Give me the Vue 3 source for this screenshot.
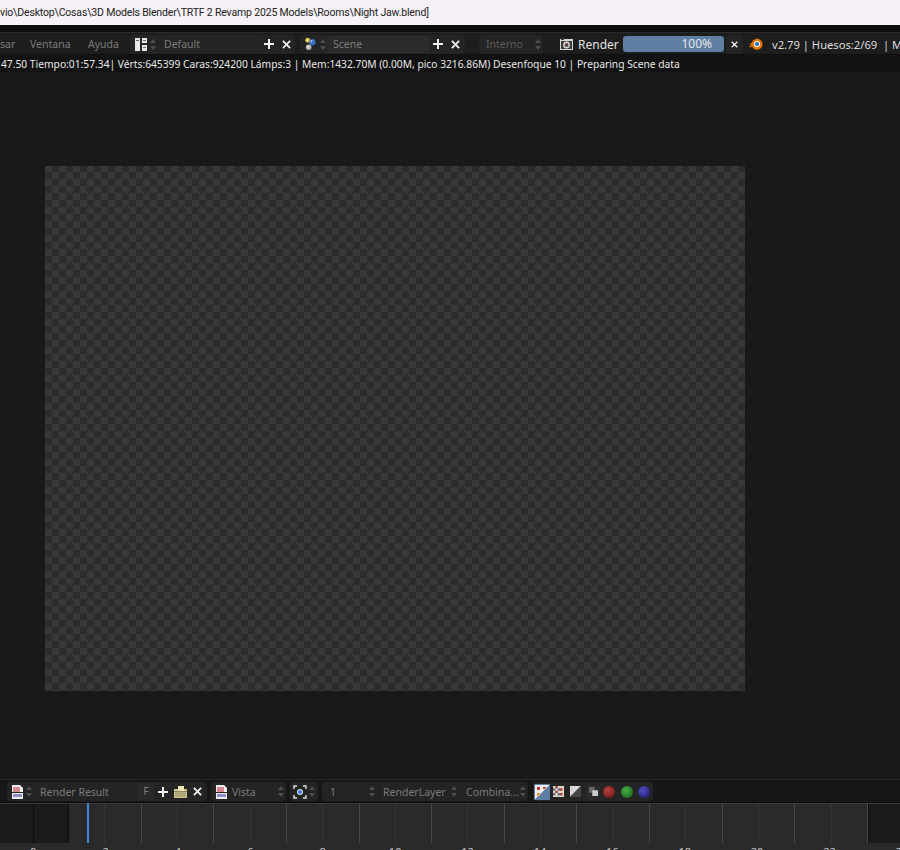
<script setup>
const ticks = Array.from({ length: 22 }, (_, i) => i)
const labels = [0, 2, 4, 6, 8, 10, 12, 14, 16, 18, 20, 22, 24]
</script>

<template>
  <div class="app">
    <div class="title">vio\Desktop\Cosas\3D Models Blender\TRTF 2 Revamp 2025 Models\Rooms\Night Jaw.blend]</div>
    <div class="gap-top"></div>

    <header class="topbar">
      <span class="menu clipped">sar</span>
      <span class="menu ventana">Ventana</span>
      <span class="menu ayuda">Ayuda</span>

      <div class="group g-default">
        <svg class="ic12" viewBox="0 0 12 13"><path fill="#e8e8e8" d="M0 0h5v13H0zM7 0h5v5H7zM7 7h5v6H7z"/><path fill="#666" d="M1 2h3v1H1zM8 2h3v1H8zM8 9h3v1H8z"/></svg>
        <i class="arrows a-l"></i>
        <span class="field f-default">Default</span>
        <svg class="op plus" viewBox="0 0 10 10"><path d="M5 0v10M0 5h10"/></svg>
        <svg class="op cross" viewBox="0 0 10 10"><path d="M1 1l8 8M9 1l-8 8"/></svg>
      </div>

      <div class="group g-scene">
        <svg class="ic13" viewBox="0 0 14 14">
          <circle cx="4" cy="3" r="2.6" fill="#e0c040"/><circle cx="3.5" cy="3" r="1" fill="#fff2a0"/>
          <circle cx="9" cy="5" r="3.4" fill="#3c6fc4"/><circle cx="8" cy="4" r="1.2" fill="#9cc0f0"/>
          <circle cx="5" cy="10.5" r="3" fill="#b8b8b8"/><circle cx="4.5" cy="10" r="1" fill="#eee"/>
        </svg>
        <i class="arrows a-s"></i>
        <span class="field f-scene">Scene</span>
        <svg class="op plus" viewBox="0 0 10 10"><path d="M5 0v10M0 5h10"/></svg>
        <svg class="op cross" viewBox="0 0 10 10"><path d="M1 1l8 8M9 1l-8 8"/></svg>
      </div>

      <div class="engine"><span>Interno</span><i class="arrows"></i></div>

      <svg class="camera" viewBox="0 0 13 12">
        <path fill="#d8d8d0" d="M0 1h13v11H0z"/><path fill="#3a3a3a" d="M1 0h3v2H1zM1 3h11v8H1z"/>
        <circle cx="6.5" cy="7" r="3.4" fill="#ddd"/><circle cx="6.5" cy="7" r="2" fill="#444"/><circle cx="6" cy="6.5" r=".8" fill="#c44"/>
      </svg>
      <span class="render-label">Render</span>
      <div class="progress"><span>100%</span></div>
      <div class="cancel"><svg class="op cross-s" viewBox="0 0 10 10"><path d="M1 1l8 8M9 1l-8 8"/></svg></div>
      <svg class="logo" viewBox="0 0 14 12">
        <path fill="#ea7600" d="M0 6.500L4.500 3.400 2.500 3.300 7.500 0.400C10.500 0.600 13.500 3 13.500 6.200c0 3.300-2.800 5.500-5.600 5.500C5.400 11.700 3.500 10 3.200 8.200L1.400 9.400C0.600 9.600 0 8.800 0.600 8.200L2.800 6.500z"/>
        <circle cx="8" cy="6" r="3.100" fill="#f3f3f3"/><circle cx="8" cy="6" r="2.100" fill="#2a6fc0"/>
      </svg>
      <span class="stats">v2.79 | Huesos:2/69 &nbsp;| M</span>
    </header>

    <div class="info">47.50 Tiempo:01:57.34| Vérts:645399 Caras:924200 Lámps:3 | Mem:1432.70M (0.00M, pico 3216.86M) Desenfoque 10 | Preparing Scene data</div>

    <main class="viewport">
      <div class="checker"></div>
    </main>

    <footer class="imgbar">
      <div class="group b-result">
        <svg class="doc" viewBox="0 0 11 14"><path fill="#eee" d="M0 0h8l3 3v11H0z"/><path fill="#d88a90" d="M1 2h7v5H1z"/><path fill="#222" d="M0 7h11v1H0z"/><path fill="#8f8fc8" d="M1 9h9v3H1z"/></svg>
        <i class="arrows a-doc"></i>
        <span class="b-name">Render Result</span>
        <span class="b-f">F</span>
        <svg class="op plus" viewBox="0 0 10 10"><path d="M5 0v10M0 5h10"/></svg>
        <svg class="folder" viewBox="0 0 13 12"><path fill="#cfc490" d="M0 3h5V1h5v2h3v9H0z"/><path fill="#efe6b4" d="M4 0h6v5H4z"/><path fill="#8d8560" d="M0 5h13v1H0z"/><path fill="#b3a878" d="M1 6h11v5H1z"/></svg>
        <svg class="op cross" viewBox="0 0 10 10"><path d="M1 1l8 8M9 1l-8 8"/></svg>
      </div>
      <div class="group b-vista">
        <svg class="doc" viewBox="0 0 11 14"><path fill="#eee" d="M0 0h8l3 3v11H0z"/><path fill="#d88a90" d="M1 2h7v5H1z"/><path fill="#222" d="M0 7h11v1H0z"/><path fill="#8f8fc8" d="M1 9h9v3H1z"/></svg>
        <span class="b-vista-text">Vista</span>
        <i class="arrows"></i>
      </div>
      <div class="group b-pivot">
        <svg class="pivot" viewBox="0 0 14 14">
          <path d="M1 4V1h3M10 1h3v3M13 10v3h-3M4 13H1v-3" fill="none" stroke="#ddd" stroke-width="1.400"/>
          <circle cx="7" cy="7" r="3" fill="#cfd8e8"/><circle cx="7" cy="7" r="1.800" fill="#2f6fd0"/>
        </svg>
        <i class="arrows"></i>
      </div>
      <div class="group b-layer">
        <span class="l-one">1</span><i class="arrows"></i>
        <span class="l-layer">RenderLayer</span><i class="arrows"></i>
        <span class="l-comb">Combina...</span><i class="arrows"></i>
      </div>
      <div class="group b-chan">
        <span class="chan sel">
          <svg class="ic14" viewBox="0 0 14 14"><path fill="#eee" d="M0 0h14L0 14z"/><path fill="#c8362e" d="M2 2h3v3H2zM8 2h3v2H8z"/><path fill="#e08a20" d="M2 8h3v3H2z"/><path stroke="#ddd" d="M14 0L0 14" fill="none"/></svg>
        </span>
        <svg class="ic14 c2" viewBox="0 0 14 14"><path fill="#ddd8c8" d="M0 0h14v14H0z"/><path fill="#a83a3a" d="M3 0h3v3H3zM9 3h3v3H9zM3 6h3v3H3zM9 9h3v3H9z"/><path fill="#6a6a80" d="M0 3h3v3H0zM6 3h3v3H6zM0 9h3v3H0zM6 9h3v3H6z"/></svg>
        <svg class="ic14 c3" viewBox="0 0 14 14"><path fill="#d8d8d8" d="M0 0h14L0 14z"/><path fill="#444" d="M14 0v14H0z"/></svg>
        <span class="z-btn"><svg viewBox="0 0 11 11"><path fill="#666" d="M0 0h7v7H0z"/><path fill="#ccc" d="M4 4h7v7H4z"/></svg></span>
        <i class="dot red"></i><i class="dot green"></i><i class="dot blue"></i>
      </div>
    </footer>

    <section class="timeline">
      <div class="track">
        <div class="pre"><span></span><span></span></div>
        <div class="range">
          <span v-for="t in ticks" :key="t" class="tick"></span>
        </div>
        <div class="post"></div>
        <span class="playhead"></span>
      </div>
      <div class="labels">
        <span v-for="l in labels" :key="l">{{ l }}</span>
      </div>
    </section>
  </div>
</template>

<style>
html, body { margin: 0; background: #191919; }
</style>

<style scoped>
.app {
  width: 900px; height: 850px; overflow: hidden; display: flex; flex-direction: column;
  background: #191919; font-family: "Noto Sans", sans-serif; font-size: 10.500px; color: #7b7b7b;
}
.title {
  height: 25px; flex: none; line-height: 26px; background: #f5f1f6; color: #222; white-space: nowrap;
  font-family: Roboto, sans-serif; font-size: 10.500px; letter-spacing: -0.17px;
}
.gap-top { height: 7px; flex: none; background: #0d0d0d; }
.topbar {
  height: 23px; flex: none; display: flex; align-items: center; background: #1d1d1d; white-space: nowrap;
  border-top: 1px solid #2a2a2a; border-bottom: 1px solid #0e0e0e; box-sizing: border-box; overflow: hidden; padding-top: 1px;
}
.menu { flex: none; }
.clipped { width: 13px; }
.ventana { margin-left: 17px; width: 41px; }
.ayuda { margin-left: 17px; width: 31px; }
.group { display: flex; align-items: center; height: 19px; background: #242424; border-radius: 4px; flex: none; box-sizing: border-box; }
.g-default { width: 165px; margin-left: 11px; padding-left: 5px; }
.ic12 { width: 12px; height: 13px; flex: none; }
.ic13 { width: 13px; height: 14px; flex: none; }
i.arrows { width: 6px; height: 11px; flex: none; display: flex; flex-direction: column; justify-content: space-between; }
i.arrows::before, i.arrows::after { content: ""; display: block; border-left: 3px solid transparent; border-right: 3px solid transparent; }
i.arrows::before { border-bottom: 4px solid #4e4e4e; }
i.arrows::after { border-top: 4px solid #4e4e4e; }
.a-l { margin-left: 3px; }
.a-s { margin-left: 3px; }
.field { display: block; height: 17px; line-height: 17px; border-radius: 3px; box-sizing: border-box; flex: none; }
.f-default { width: 103px; margin-left: 2px; padding-left: 6px; background: #242424; }
.f-scene { width: 103px; margin-left: 1px; padding-left: 6px; background: #2b2b2b; }
.op { fill: none; stroke: #f0f0f0; stroke-width: 2; flex: none; }
.plus { width: 10px; height: 10px; margin-left: 3px; }
.cross { width: 9px; height: 9px; margin-left: 8px; }
.g-scene { width: 165px; margin-left: 5px; padding-left: 4px; }
.engine { width: 64px; height: 19px; margin-left: 14px; padding: 0 2px 0 7px; box-sizing: border-box; background: #242424; border-radius: 4px; display: flex; align-items: center; justify-content: space-between; color: #5c5c5c; flex: none; }
.camera { width: 13px; height: 12px; margin-left: 17px; flex: none; }
.render-label { margin-left: 5px; font-size: 12px; color: #e2e2e2; width: 40px; flex: none; }
.progress { width: 101px; height: 16px; margin-left: 5px; background: #5f7fa3; border-radius: 3px; font-size: 12px; line-height: 16px; color: #e6e6e6; text-align: right; padding-right: 12px; box-sizing: border-box; flex: none; }
.cancel { width: 17px; height: 19px; margin-left: 2px; background: #242424; border-radius: 3px; display: flex; align-items: center; justify-content: center; flex: none; }
.cross-s { width: 7px; height: 7px; }
.logo { width: 14px; height: 12px; margin-left: 6px; flex: none; }
.stats { margin-left: 9px; font-size: 11.200px; color: #dcdcdc; }
.info { height: 17px; flex: none; line-height: 18px; padding-left: 1px; background: #131313; color: #e8e8e8; white-space: nowrap; overflow: hidden; font-size: 10.250px; }
.viewport { flex: 1; min-height: 0; box-sizing: border-box; padding: 94px 0 0 45px; background: #191919; border-bottom: 1px solid #262626; }
.checker {
  width: 700px; height: 525px;
  background: repeating-conic-gradient(#2c2c2c 0 25%, #383838 0 50%) 0 -1px / 14px 14px;
}
.imgbar { height: 21px; flex: none; display: flex; align-items: center; background: #171717; padding: 1px 0 0 7px; border-bottom: 1px solid #0d0d0d; color: #7b7b7b; }
.b-result { width: 200px; padding-left: 5px; }
.doc { width: 11px; height: 14px; flex: none; }
.a-doc { margin-left: 3px; }
.b-name { width: 98px; margin-left: 8px; flex: none; }
.b-f { width: 16px; height: 17px; line-height: 17px; text-align: center; background: #292929; flex: none; }
.b-result .plus { margin-left: 4px; }
.folder { width: 13px; height: 12px; margin-left: 6px; flex: none; }
.b-result .cross { margin-left: 6px; }
.b-vista { width: 75px; margin-left: 4px; padding: 0 2px 0 5px; }
.b-vista-text { margin-left: 5px; flex: 1; }
.b-pivot { width: 28px; margin-left: 4px; padding-left: 3px; }
.pivot { width: 14px; height: 14px; flex: none; margin-right: 2px; }
.b-layer { width: 206px; margin-left: 4px; padding-left: 8px; }
.l-one { width: 39px; flex: none; }
.l-layer { margin-left: 8px; width: 62px; flex: none; }
.b-layer i:nth-of-type(2) { margin-left: 6px; }
.l-comb { margin-left: 9px; width: 54px; flex: none; }
.b-chan { width: 120px; margin-left: 5px; padding-left: 2px; }
.chan { width: 14px; height: 14px; display: block; padding: 1px; background: #5d7fa6; border-radius: 1px; margin-left: -1px; flex: none; }
.ic14 { width: 14px; height: 14px; display: block; flex: none; }
.c2 { width: 11px; height: 11px; margin-left: 3px; }
.c3 { width: 11px; height: 11px; margin-left: 6px; }
.z-btn { width: 14px; height: 14px; margin-left: 5px; background: #2a2a2a; border-radius: 2px; display: flex; align-items: center; justify-content: center; flex: none; }
.z-btn svg { width: 9px; height: 9px; }
.dot { width: 12px; height: 12px; border-radius: 50%; margin-left: 6px; flex: none; }
.red { background: radial-gradient(circle at 40% 35%, #b84040, #601212); margin-left: 3px; }
.green { background: radial-gradient(circle at 40% 35%, #46ac46, #145c14); }
.blue { background: radial-gradient(circle at 40% 35%, #5252c4, #121260); margin-left: 5px; }
.timeline { height: 47px; flex: none; background: #2a2a2a; overflow: hidden; }
.track { height: 40px; display: flex; position: relative; border-top: 1px solid #3a3a3a; box-sizing: border-box; }
.pre { width: 69px; flex: none; display: flex; background: #1a1a1a; }
.pre span { flex: 1; border-right: 1px solid #0c0c0c; }
.pre span:first-child { flex: none; width: 33px; }
.range { width: 799px; flex: none; display: flex; }
.tick { width: 36.320px; flex: none; box-sizing: border-box; border-right: 1px solid #363636; }
.tick:nth-child(even) { border-right-color: #484848; }
.post { flex: 1; background: #1a1a1a; border-left: 1px solid #0c0c0c; }
.playhead { position: absolute; left: 87px; top: -1px; bottom: 0; width: 2px; background: #3f86d6; }
.labels { display: flex; margin-left: -3px; line-height: 13px; color: #c8c8c8; font-size: 11px; padding-top: 2px; }
.labels span { width: 72.400px; flex: none; text-align: center; }
</style>
